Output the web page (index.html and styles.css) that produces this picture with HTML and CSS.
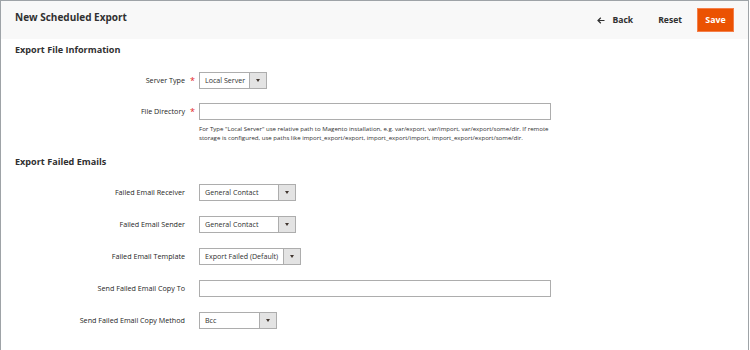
FILE: index.html
```html
<!DOCTYPE html>
<html>

<head>
  <title>New Scheduled Export</title>
  <meta charset="utf-8">
  <link rel="stylesheet" href="styles.css">
</head>

<body>
  <div class="frame">
    <div class="page-header">
      <h1>New Scheduled Export</h1>
      <div class="actions">
        <a href="#" class="action-back">
          <svg class="arrow" width="8" height="7" viewBox="0 0 8 7">
            <path d="M7.5 3.5H1.2M3.8 0.8L1 3.5l2.8 2.7" fill="none" stroke="#303030" stroke-width="1.2"/>
          </svg>
          Back
        </a>
        <a href="#" class="action-reset">Reset</a>
        <button class="action-save">Save</button>
      </div>
    </div>

    <div class="content">
      <div class="fieldset">
        <h2>Export File Information</h2>
        <div class="field required">
          <label>Server Type</label>
          <div class="control">
            <div class="select" style="width: 68px">
              <span class="select-value">Local Server</span>
              <span class="select-arrow"></span>
            </div>
          </div>
        </div>
        <div class="field required">
          <label>File Directory</label>
          <div class="control">
            <input type="text" class="input-text">
            <div class="note">For Type "Local Server" use relative path to Magento installation, e.g. var/export, var/import, var/export/some/dir. If remote storage is configured, use paths like import_export/export, import_export/import, import_export/export/some/dir.</div>
          </div>
        </div>
      </div>

      <div class="fieldset emails">
        <h2>Export Failed Emails</h2>
        <div class="field">
          <label>Failed Email Receiver</label>
          <div class="control">
            <div class="select" style="width: 97px">
              <span class="select-value">General Contact</span>
              <span class="select-arrow"></span>
            </div>
          </div>
        </div>
        <div class="field">
          <label>Failed Email Sender</label>
          <div class="control">
            <div class="select" style="width: 97px">
              <span class="select-value">General Contact</span>
              <span class="select-arrow"></span>
            </div>
          </div>
        </div>
        <div class="field">
          <label>Failed Email Template</label>
          <div class="control">
            <div class="select" style="width: 102px">
              <span class="select-value">Export Failed (Default)</span>
              <span class="select-arrow"></span>
            </div>
          </div>
        </div>
        <div class="field">
          <label>Send Failed Email Copy To</label>
          <div class="control">
            <input type="text" class="input-text">
          </div>
        </div>
        <div class="field">
          <label>Send Failed Email Copy Method</label>
          <div class="control">
            <div class="select" style="width: 78px">
              <span class="select-value">Bcc</span>
              <span class="select-arrow"></span>
            </div>
          </div>
        </div>
      </div>
    </div>
  </div>
</body>

</html>
```

FILE: styles.css
```css
html, body {
  margin: 0;
  padding: 0;
  background: #fff;
}

body {
  font-family: "Open Sans", "Liberation Sans", Arial, sans-serif;
  color: #303030;
}

.frame {
  width: 749px;
  height: 350px;
  box-sizing: border-box;
  border: 1px solid #9ea3a7;
  border-bottom: none;
  overflow: hidden;
}

.page-header {
  display: flex;
  align-items: center;
  justify-content: space-between;
  height: 38px;
  padding: 0 14px 0 14px;
  background-color: #f8f8f8;
}

.page-header h1 {
  margin: 0 0 6px 0;
  font-size: 10px;
  font-weight: 700;
  color: #303030;
}

.actions {
  display: flex;
  align-items: center;
}

.actions a {
  display: flex;
  align-items: center;
  color: #303030;
  text-decoration: none;
  font-size: 8.6px;
  font-weight: 700;
}

.action-back {
  margin-right: 25px;
}

.action-back .arrow {
  margin-right: 7px;
  margin-left: 2px;
}

.action-reset {
  margin-right: 15px;
}

.action-save {
  width: 37px;
  height: 24px;
  padding: 0;
  border: 1px solid #f47f4a;
  background-color: #eb5202;
  color: #fff;
  font-family: inherit;
  font-size: 8.8px;
  font-weight: 700;
  cursor: pointer;
}

.content {
  padding: 0 14px;
}

.fieldset h2 {
  margin: 0;
  font-size: 9.1px;
  font-weight: 700;
  height: 22px;
  line-height: 22px;
}

.fieldset + .fieldset h2 {
  margin-top: 9px;
}

.field {
  display: grid;
  grid-template-columns: 170px 14px 1fr;
  align-items: start;
  margin-top: 14px;
  min-height: 17px;
}

.emails .field {
  margin-top: 15px;
}

.fieldset h2 + .field {
  margin-top: 11px;
}

.field label {
  text-align: right;
  font-size: 7.2px;
  line-height: 17px;
  color: #262626;
  grid-column: 1;
}

.field.required label::after {
  content: "*";
  color: #e22626;
  position: absolute;
  margin-left: 5px;
  font-size: 9px;
}

.control {
  grid-column: 3;
}

.select {
  display: flex;
  height: 17px;
  box-sizing: border-box;
  border: 1px solid #adadad;
  background: #fff;
  font-size: 7.1px;
  line-height: 15px;
}

.select-value {
  flex: 1;
  padding-left: 5px;
  white-space: nowrap;
  overflow: hidden;
}

.select-arrow {
  width: 16px;
  background-color: #e3e3e3;
  border-left: 1px solid #adadad;
  position: relative;
}

.select-arrow::after {
  content: "";
  position: absolute;
  left: 6px;
  top: 6px;
  border-left: 2.5px solid transparent;
  border-right: 2.5px solid transparent;
  border-top: 3px solid #41362f;
}

.input-text {
  display: block;
  width: 352px;
  height: 17px;
  box-sizing: border-box;
  margin: 0;
  border: 1px solid #adadad;
  background: #fff;
  font-family: inherit;
  font-size: 7.1px;
}

.note {
  width: 356px;
  margin-top: 4px;
  font-size: 6.1px;
  line-height: 9px;
  color: #303030;
}
```
